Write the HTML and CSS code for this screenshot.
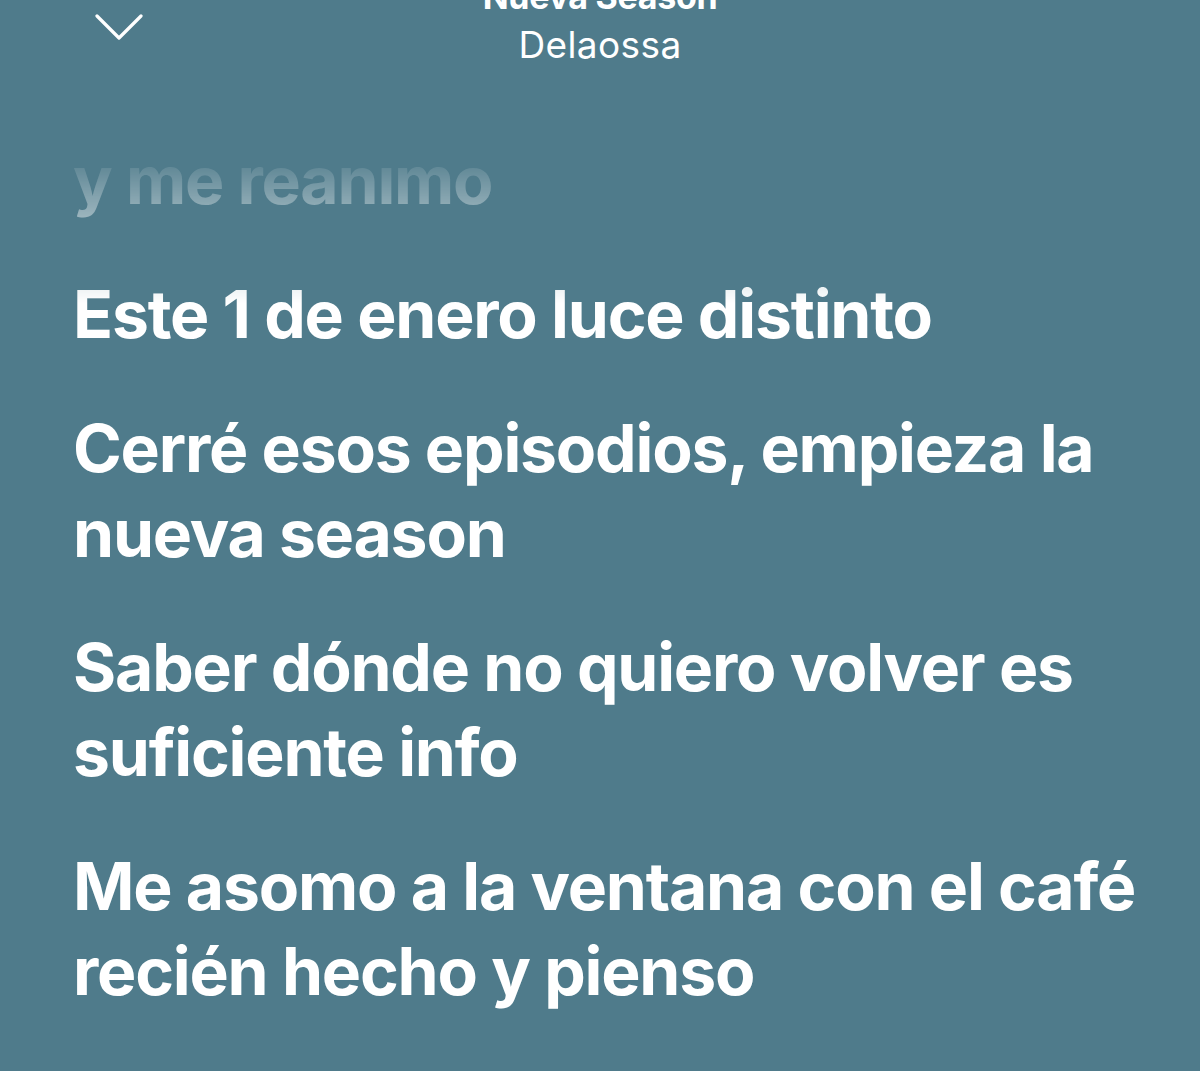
FILE: index.html
```html
<!DOCTYPE html>
<html lang="es">
<head>
  <meta charset="UTF-8">
  <title>Nueva Season · Delaossa · Letra</title>
  <link rel="stylesheet" href="styles.css">
</head>
<body>
  <div class="top">
    <div class="back">
      <svg width="48" height="28" viewBox="0 0 48 28">
        <polyline points="2,2 24,24 46,2" fill="none" stroke="#fff" stroke-width="3.2" stroke-linecap="round" stroke-linejoin="round"/>
      </svg>
    </div>
    <div class="track">
      <div class="song">Nueva Season</div>
      <div class="artist">Delaossa</div>
    </div>
    <div></div>
  </div>

  <div class="lyrics">
    <p class="line">y me reanimo</p>
    <p class="line">Este 1 de enero luce distinto</p>
    <p class="line">Cerré esos episodios, empieza la nueva season</p>
    <p class="line">Saber dónde no quiero volver es suficiente info</p>
    <p class="line">Me asomo a la ventana con el café recién hecho y pienso</p>
  </div>
</body>
</html>
```

FILE: styles.css
```css
body {
  margin: 0;
  width: 1200px;
  height: 1071px;
  overflow: hidden;
  background: #4f7b8b;
  color: #fff;
  font-family: Inter, "Noto Sans", sans-serif;
}
.top {
  display: grid;
  grid-template-columns: 1fr auto 1fr;
  height: 70px;
}
.back {
  padding: 14px 0 0 95px;
}
.track {
  text-align: center;
  margin-top: -21px;
}
.song {
  font-size: 34px;
  font-weight: 700;
  line-height: 36px;
  letter-spacing: -0.3px;
}
.artist {
  margin-top: 8px;
  font-size: 37px;
  line-height: 44px;
  font-weight: 400;
  letter-spacing: 0.4px;
}
.lyrics {
  padding: 0 60px 0 73px;
  margin-top: 68px;
  -webkit-mask-image: linear-gradient(to bottom, transparent 27px, rgba(0,0,0,0.1) 28px, #000 165px);
  mask-image: linear-gradient(to bottom, transparent 27px, rgba(0,0,0,0.1) 28px, #000 165px);
}
.line {
  margin: 0 0 49px;
  font-size: 66px;
  line-height: 85px;
  font-weight: 700;
  letter-spacing: -1.2px;
}
```
